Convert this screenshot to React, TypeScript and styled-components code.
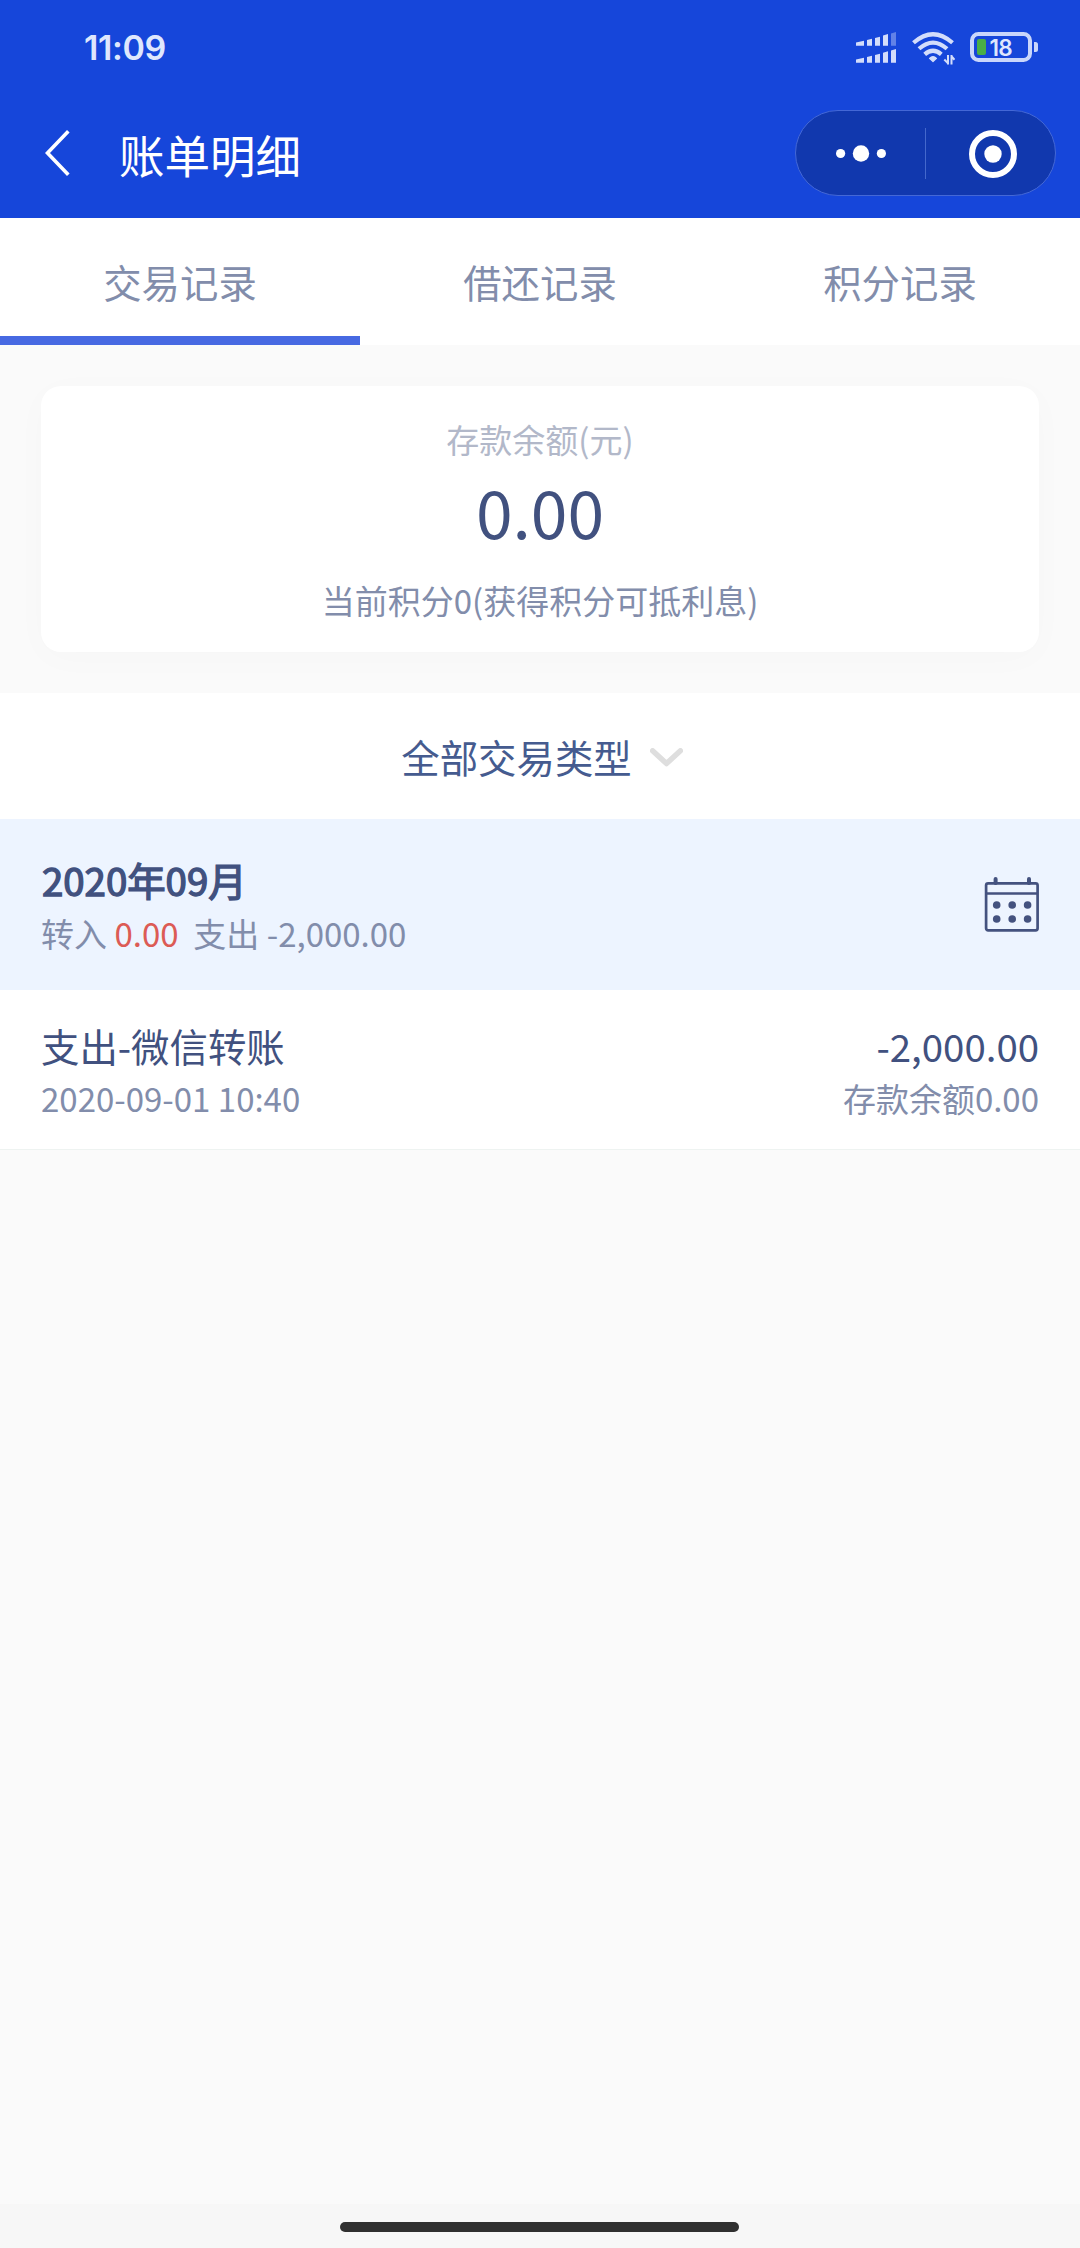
import React from "react";
import styled, { createGlobalStyle } from "styled-components";

const GlobalStyle = createGlobalStyle`
  * { box-sizing: border-box; }
  body {
    margin: 0;
    background: #fafafa;
    font-family: "Noto Sans CJK SC", "Noto Sans", sans-serif;
  }
`;

const Page = styled.div`
  width: 1080px;
  height: 2248px;
  display: flex;
  flex-direction: column;
  background: #fafafa;
  overflow: hidden;
`;

const Header = styled.header`
  height: 218px;
  background: #1646da;
  display: flex;
  flex-direction: column;
`;

const StatusBar = styled.div`
  height: 88px;
  padding: 9px 41px 0 84px;
  display: flex;
  align-items: center;
  justify-content: space-between;
`;

const Clock = styled.span`
  margin-bottom: 2px;
  font-family: Inter, sans-serif;
  font-size: 34px;
  line-height: 50px;
  letter-spacing: -0.4px;
  font-weight: 600;
  color: #dfe7fd;
`;

const StatusIcons = styled.div`
  display: flex;
  align-items: flex-start;
  gap: 15px;
`;

const NavBar = styled.div`
  height: 130px;
  padding: 0 24px 0 45px;
  display: flex;
  align-items: center;
`;

const Title = styled.h1`
  margin: 0 auto 0 48px;
  padding-top: 2px;
  font-size: 45.5px;
  line-height: 70px;
  font-weight: 400;
  color: #fff;
`;

const Capsule = styled.div`
  width: 261px;
  height: 86px;
  border: 1px solid #4468d6;
  border-radius: 43px;
  background: #1138ae;
  display: flex;
  align-items: center;
`;

const CapsuleDivider = styled.span`
  width: 1px;
  height: 51px;
  background: #4468cc;
`;

const CapsuleButton = styled.div<{ $shift?: number }>`
  width: 129px;
  padding-left: ${(p) => p.$shift ?? 0}px;
  padding-top: 1px;
  display: flex;
  align-items: center;
  justify-content: center;
`;

const Tabs = styled.nav`
  height: 127px;
  display: grid;
  grid-template-columns: repeat(3, 1fr);
  background: #fff;
`;

const Tab = styled.div<{ $active?: boolean }>`
  height: 127px;
  border-bottom: 9px solid ${(p) => (p.$active ? "#4769e2" : "transparent")};
  font-size: 38.4px;
  line-height: 126px;
  text-align: center;
  color: #828dab;
`;

const Card = styled.section`
  height: 266px;
  margin: 41px 41px;
  padding-top: 28px;
  border-radius: 20px;
  background: #fff;
  box-shadow: 0 6px 36px rgba(0, 0, 0, 0.018);
  text-align: center;
`;

const CardLabel = styled.div`
  font-size: 33px;
  line-height: 50px;
  color: #b2b8c9;
`;

const Balance = styled.div`
  font-size: 66px;
  line-height: 92px;
  color: #41517f;
`;

const Points = styled.div`
  margin-top: 19px;
  font-size: 33px;
  line-height: 50px;
  color: #828dab;
`;

const Filter = styled.div`
  height: 126px;
  display: flex;
  align-items: center;
  justify-content: center;
  gap: 18px;
  padding-left: 4px;
  background: #fff;
  font-size: 38.4px;
  line-height: 126px;
  color: #455b8f;
`;

const ChevronSlot = styled.span`
  display: flex;
  padding-top: 4px;
`;

const MonthBar = styled.div`
  height: 171px;
  padding: 33px 41px 0;
  display: flex;
  justify-content: space-between;
  align-items: flex-start;
  background: #edf4ff;
`;

const Month = styled.div`
  padding-left: 1px;
  font-size: 38.4px;
  line-height: 54px;
  color: #41517f;
  -webkit-text-stroke: 1.4px #41517f;
`;

const Summary = styled.div`
  margin-top: 2px;
  font-size: 33px;
  line-height: 50px;
  color: #828dab;
  white-space: pre;
`;

const Income = styled.span`
  color: #dc5b55;
`;

const CalendarSlot = styled.div`
  padding-top: 24px;
  display: flex;
`;

const Entry = styled.div`
  height: 160px;
  padding: 27px 41px 0;
  display: flex;
  justify-content: space-between;
  background: #fff;
  border-bottom: 1px solid #eef3f1;
`;

const EntryColumn = styled.div<{ $align: "left" | "right" }>`
  text-align: ${(p) => p.$align};
`;

const EntryMain = styled.div`
  font-size: 38.4px;
  line-height: 56px;
  color: #41517f;
`;

const EntrySub = styled.div`
  font-size: 33px;
  line-height: 50px;
  color: #828dab;
`;

const HomeArea = styled.footer`
  margin-top: auto;
  height: 44px;
  padding: 18px 1px 0 0;
  background: #f7f7f7;
  display: flex;
  justify-content: center;
`;

const HomePill = styled.span`
  width: 399px;
  height: 10px;
  border-radius: 5px;
  background: #303030;
`;

const SignalIcon = () => (
  <svg width="41" height="32" viewBox="0 0 41 32" fill="#d3ddfb">
    <path d="M0 10.500 8 8.800v5H0zM11 8l5-1.300V13.800h-5zM19 6l5-1.300V13.800h-5zM27 3.600l5-1.500V13.800h-5z" />
    <path d="M35 1.600 40 .1V13.800h-5z" opacity="0.4" />
    <path d="M0 27.500 8 25.800v5H0zM11 25l5-1.300V30.800h-5zM19 23l5-1.300V30.800h-5zM27 20.700l5-1.500V30.800h-5zM35 18.600 40 17.100V30.800h-5z" />
  </svg>
);

const WifiIcon = () => (
  <svg width="43" height="33" viewBox="0 0 43 33" fill="none">
    <g stroke="#d3ddfb" strokeWidth="4.200">
      <path d="M1.500 10.800Q21 -6.400 40.500 10.800" />
      <path d="M7 16.800Q21 4.400 35 16.800" />
      <path d="M12.700 22.400Q21 15.200 29.300 22.400" />
    </g>
    <path d="M21 29.500 17.500 26.300Q21 22.800 24.500 26.300Z" fill="#d3ddfb" stroke="#d3ddfb" strokeWidth="1.200" strokeLinejoin="round" />
    <path d="M36 23V32.500M36.300 31.500 32.300 27.500M39.500 32.500V23M39.200 24 42.500 27.800" stroke="#d3ddfb" strokeWidth="2" />
  </svg>
);

const BatteryIcon = () => (
  <svg width="69" height="31" viewBox="0 0 69 31">
    <rect x="2" y="2" width="58" height="26" rx="6.500" fill="none" stroke="#c9d6fb" strokeWidth="4" />
    <rect x="7" y="7" width="9" height="16" rx="2" fill="#4aae46" />
    <path d="M64 10h1.500a2.500 2.500 0 0 1 2.500 2.500v5a2.500 2.500 0 0 1-2.500 2.500H64z" fill="#c9d6fb" />
    <text x="30.800" y="23.500" textAnchor="middle" fontFamily="Inter, sans-serif" fontWeight="600" fontSize="22.500" letterSpacing="-0.700" fill="#dfe7fd">
      18
    </text>
  </svg>
);

const BackIcon = () => (
  <svg width="26" height="46" viewBox="0 0 26 46" fill="none">
    <path d="M23.300 1.300 2.500 23 23.300 44.700" stroke="#fff" strokeWidth="3.600" />
  </svg>
);

const MoreIcon = () => (
  <svg width="50" height="18" viewBox="0 0 50 18" fill="#fff">
    <circle cx="4.600" cy="8.500" r="4.600" />
    <circle cx="25" cy="8.500" r="8.200" />
    <circle cx="45.400" cy="8.500" r="4.600" />
  </svg>
);

const CloseTargetIcon = () => (
  <svg width="48" height="48" viewBox="0 0 48 48">
    <circle cx="24" cy="24" r="21" fill="none" stroke="#fff" strokeWidth="6" />
    <circle cx="24" cy="24" r="8.700" fill="#fff" />
  </svg>
);

const ChevronIcon = () => (
  <svg width="33" height="20" viewBox="0 0 33 20" fill="none">
    <path d="M2.600 2.800 16.500 15.600 30.400 2.800" stroke="#dedede" strokeWidth="5.400" strokeLinecap="round" strokeLinejoin="round" />
  </svg>
);

const CalendarIcon = () => (
  <svg width="55" height="56" viewBox="0 0 55 56" fill="none" stroke="#44527f">
    <rect x="2.100" y="7.300" width="51.500" height="47" rx="2" strokeWidth="2.700" />
    <path d="M2 17.500H54" strokeWidth="2.600" />
    <path d="M11.600 3V7M45 3V7" strokeWidth="4" strokeLinecap="round" />
    <g fill="#44527f" stroke="none">
      {[29, 43].map((y) => [12.7, 28.2, 43.600].map((x) => <circle key={`${x}-${y}`} cx={x} cy={y} r="3.800" />))}
    </g>
  </svg>
);

const tabs = ["交易记录", "借还记录", "积分记录"];

export default function App() {
  return (
    <>
      <GlobalStyle />
      <Page>
        <Header>
          <StatusBar>
            <Clock>11:09</Clock>
            <StatusIcons>
              <SignalIcon />
              <WifiIcon />
              <BatteryIcon />
            </StatusIcons>
          </StatusBar>
          <NavBar>
            <BackIcon />
            <Title>账单明细</Title>
            <Capsule>
              <CapsuleButton>
                <MoreIcon />
              </CapsuleButton>
              <CapsuleDivider />
              <CapsuleButton $shift={5}>
                <CloseTargetIcon />
              </CapsuleButton>
            </Capsule>
          </NavBar>
        </Header>
        <Tabs>
          {tabs.map((name, i) => (
            <Tab key={name} $active={i === 0}>
              {name}
            </Tab>
          ))}
        </Tabs>
        <Card>
          <CardLabel>存款余额(元)</CardLabel>
          <Balance>0.00</Balance>
          <Points>当前积分0(获得积分可抵利息)</Points>
        </Card>
        <Filter>
          全部交易类型
          <ChevronSlot>
            <ChevronIcon />
          </ChevronSlot>
        </Filter>
        <MonthBar>
          <div>
            <Month>2020年09月</Month>
            <Summary>
              转入 <Income>0.00</Income>
              {"  支出 -2,000.00"}
            </Summary>
          </div>
          <CalendarSlot>
            <CalendarIcon />
          </CalendarSlot>
        </MonthBar>
        <Entry>
          <EntryColumn $align="left">
            <EntryMain>支出-微信转账</EntryMain>
            <EntrySub>2020-09-01 10:40</EntrySub>
          </EntryColumn>
          <EntryColumn $align="right">
            <EntryMain>-2,000.00</EntryMain>
            <EntrySub>存款余额0.00</EntrySub>
          </EntryColumn>
        </Entry>
        <HomeArea>
          <HomePill />
        </HomeArea>
      </Page>
    </>
  );
}
